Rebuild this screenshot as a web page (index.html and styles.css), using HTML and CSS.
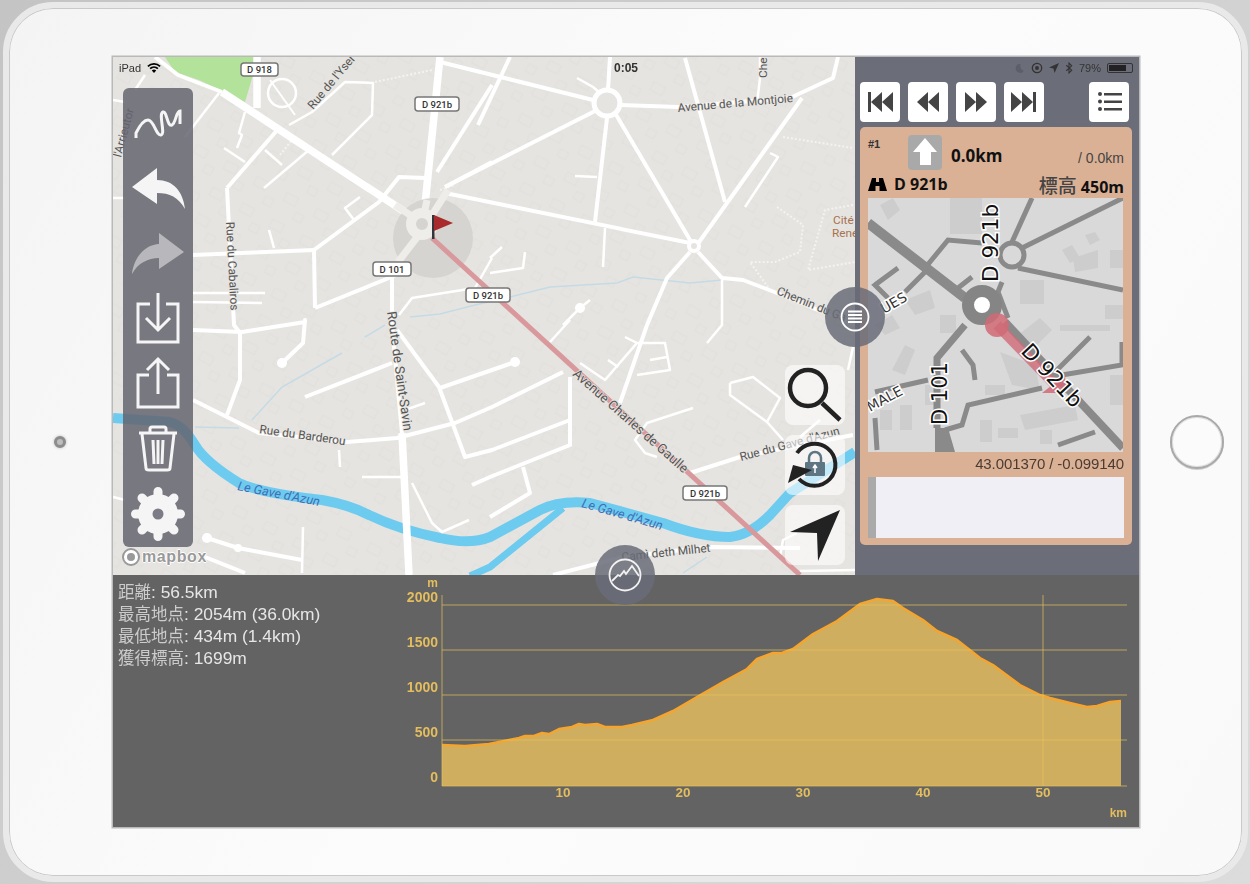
FILE: index.html
```html
<!DOCTYPE html>
<html lang="ja">
<head>
<meta charset="UTF-8">
<meta name="viewport" content="width=device-width, initial-scale=1.0">
<title>ルートプランナー</title>
<link rel="stylesheet" href="styles.css">
</head>
<body>

<div class="device">
    <div class="camera"></div>

    <div class="screen">
        <div class="map">
            <svg class="map-canvas" viewBox="113 57 742 518" width="742" height="518">
                <defs>
                    <pattern id="houses" width="34" height="30" patternUnits="userSpaceOnUse" patternTransform="rotate(28)">
                        <rect x="4" y="5" width="13" height="9" fill="none" stroke="#e1dfdb"/>
                        <rect x="21" y="18" width="9" height="8" fill="none" stroke="#e1dfdb"/>
                    </pattern>
                </defs>
                <rect x="113" y="57" width="742" height="518" fill="#e6e4e0"/>
                <rect x="113" y="57" width="742" height="518" fill="url(#houses)"/>
                <polygon points="165,57 175,72 199,80 245,102 255,68 255,57" fill="#b3e29a"/>

                <!-- streams and footpaths -->
                <g class="stream">
                    <polyline points="342,353 282,387 252,420"/>
                    <polyline points="195,427 239,428"/>
                    <polyline points="365,337 385,325"/>
                    <polyline points="510,297 550,287 617,283 633,277 690,283 722,280"/>
                    <polyline points="410,317 440,314 475,305 510,297"/>
                    <polyline points="683,573 707,557"/>
                </g>
                <g class="footpath">
                    <polyline points="375,82 432,70"/>
                    <polyline points="783,137 853,148"/>
                    <polyline points="777,207 803,225 800,252 775,262 750,262 770,290"/>
                    <polyline points="853,205 825,210 808,270 855,262"/>
                    <polyline points="440,190 455,185"/>
                    <polyline points="280,155 292,140"/>
                </g>

                <!-- river -->
                <path class="river" d="M113 418 170 422Q183 425 195 445 205 462 239 483 260 493 322 500 350 505 369 515 400 530 440 538 470 545 490 537L540 510Q560 500 590 503L663 523Q700 537 730 537 750 535 770 515L790 493 855 452"/>
                <polyline class="river-thin" points="470,576 490,567 563,508"/>

                <!-- small streets -->
                <g class="rd-s">
                    <polyline points="289,125 312,112 345,82 373,83 372,115 332,155"/>
                    <polyline points="265,150 282,165"/>
                    <polyline points="224,148 245,162"/>
                    <polyline points="245,112 239,133 242,135 237,148"/>
                    <polyline points="264,188 309,150"/>
                    <polyline points="360,197 345,208 354,220"/>
                    <polyline points="269,230 274,248"/>
                    <polyline points="193,293 265,293"/>
                    <polyline points="193,302 262,303"/>
                    <polyline points="219,93 185,137"/>
                    <polyline points="145,75 135,90"/>
                    <polyline points="113,100 125,102"/>
                    <polyline points="113,198 125,198"/>
                    <polyline points="113,497 125,500"/>
                    <polyline points="399,315 412,298 475,288 492,258"/>
                    <polyline points="339,450 340,467"/>
                    <polyline points="362,477 402,477"/>
                    <polyline points="412,483 432,523 442,532 469,520"/>
                    <polyline points="405,410 425,403"/>
                    <polyline points="303,527 302,573"/>
                    <polyline points="575,176 597,177"/>
                    <polyline points="605,228 603,267"/>
                    <polyline points="577,78 593,87 600,93"/>
                    <polyline points="770,153 778,157 745,207"/>
                    <polyline points="760,57 760,78 757,103"/>
                    <polyline points="722,278 722,325 707,343"/>
                    <polyline points="490,273 523,268 525,252"/>
                    <polyline points="490,258 502,247"/>
                    <polyline points="563,325 580,308 590,300"/>
                    <polyline points="550,342 570,320"/>
                    <polyline points="580,363 605,380 637,343 625,337"/>
                    <polyline points="608,360 618,367"/>
                    <polyline points="637,343 665,343 670,370 637,375"/>
                    <polyline points="650,360 667,357"/>
                    <polyline points="693,408 647,423 635,440 645,453 657,457"/>
                    <polyline points="730,383 753,377 780,398 767,422"/>
                    <polyline points="730,383 730,395 767,422 783,440"/>
                    <polyline points="800,437 820,420"/>
                    <polyline points="780,557 783,540 797,533"/>
                    <polyline points="848,370 853,347"/>
                    <polyline points="823,312 855,325"/>
                    <polyline points="800,571 855,570"/>
                </g>

                <!-- medium streets -->
                <g class="rd-m">
                    <polyline points="155,57 178,75 222,92"/>
                    <polyline points="227,188 279,128"/>
                    <polyline points="227,188 234,325 240,333 240,380 227,415"/>
                    <polyline points="193,255 314,250"/>
                    <polyline points="314,250 379,202 399,177 425,178"/>
                    <polyline points="314,250 315,308"/>
                    <polyline points="315,308 389,278 412,268"/>
                    <polyline points="193,330 242,332 305,322 305,320 303,343 282,363"/>
                    <polyline points="193,400 259,433 347,442 397,438 455,423 492,407 563,372"/>
                    <polyline points="305,397 392,363"/>
                    <polyline points="397,330 439,387 465,457 492,450 570,420"/>
                    <polyline points="440,388 515,362"/>
                    <polyline points="207,538 238,548 302,560"/>
                    <polyline points="205,557 245,573"/>
                    <polyline points="472,485 490,477 570,445 570,377"/>
                    <polyline points="523,467 530,493 490,517"/>
                    <polyline points="492,85 437,172"/>
                    <polyline points="510,57 478,125"/>
                    <polyline points="492,162 445,187"/>
                    <polyline points="445,193 690,243"/>
                    <polyline points="440,62 593,100"/>
                    <polyline points="445,187 597,110"/>
                    <polyline points="610,57 608,90"/>
                    <polyline points="607,118 595,222"/>
                    <polyline points="615,113 693,245"/>
                    <polyline points="685,58 725,202"/>
                    <polyline points="620,105 678,107 790,98 833,78 838,57"/>
                    <polyline points="802,98 697,245"/>
                    <polyline points="690,252 667,278 647,325 620,403"/>
                    <polyline points="698,252 722,278"/>
                    <polyline points="722,278 743,280 777,293 823,312"/>
                    <polyline points="690,473 740,457 853,435"/>
                    <polyline points="553,575 623,557 707,547 800,548"/>
                </g>

                <!-- main roads -->
                <g class="rd-l">
                    <polyline points="222,92 405,212"/>
                    <polyline points="440,57 425,205"/>
                    <polyline points="257,57 257,108"/>
                </g>
                <circle class="rd-ring" cx="282" cy="93" r="14"/>
                <line class="rd-thin" x1="270" y1="80" x2="295" y2="115"/>
                <polyline class="rd-m" points="392,278 392,325 402,433"/>
                <polyline class="rd-l" points="402,433 409,575"/>
                <circle class="knob" cx="282" cy="363" r="5"/>
                <circle class="knob" cx="207" cy="538" r="5"/>
                <circle class="knob" cx="238" cy="548" r="4"/>
                <circle class="knob" cx="515" cy="362" r="5"/>
                <circle class="knob" cx="580" cy="308" r="5"/>
                <circle class="ring-big" cx="607" cy="103" r="13"/>
                <circle class="ring-small" cx="694" cy="246" r="5"/>

                <!-- roundabout with the start flag -->
                <circle cx="433" cy="238" r="40" fill="#d6d4d0"/>
                <polyline class="rd-arm" points="418,236 398,262"/>
                <polyline class="rd-arm" points="395,205 413,217"/>
                <polyline class="rd-arm" points="427,200 424,214"/>
                <polyline class="rd-arm" points="448,190 432,215"/>
                <circle cx="422" cy="224" r="11" fill="#d6d4d0" stroke="#eeedea" stroke-width="10"/>
                <polyline class="route" points="432,238 800,575"/>
                <rect x="432" y="215" width="2.5" height="24" fill="#34343a"/>
                <polygon points="434,215 453,223 434,231" fill="#a82a2c"/>

                <!-- street names -->
                <text class="street" transform="translate(313,110) rotate(-50)">Rue de l'Yser</text>
                <text class="street" transform="translate(226,222) rotate(87)">Rue du Cabaliros</text>
                <text class="street street-lg" transform="translate(387,312) rotate(82)">Route de Saint-Savin</text>
                <text class="street" transform="translate(259,433) rotate(8)">Rue du Barderou</text>
                <text class="street" transform="translate(678,112) rotate(-5)">Avenue de la Montjoie</text>
                <text class="street street-lg" transform="translate(572,375) rotate(41.5)">Avenue Charles de Gaulle</text>
                <text class="street" transform="translate(741,461) rotate(-15)">Rue du Gave d'Azun</text>
                <text class="street" transform="translate(622,561) rotate(-6)">Camì deth Mìlhet</text>
                <text class="street" transform="translate(776,294) rotate(22)">Chemin du Ga</text>
                <text class="street" transform="translate(121,158) rotate(-75)">l'Arrieutor</text>
                <text class="street" transform="translate(767,78) rotate(-90)">Che</text>
                <text class="water" transform="translate(237,490) rotate(11)">Le Gave d'Azun</text>
                <text class="water" transform="translate(581,507) rotate(16)">Le Gave d'Azun</text>
                <text class="place" x="833" y="224">Cité</text>
                <text class="place" x="832" y="237">René</text>

                <!-- road numbers -->
                <g class="shield"><rect x="241" y="63" width="37" height="13" rx="3"/><text x="259.5" y="73">D 918</text></g>
                <g class="shield"><rect x="415" y="97" width="44" height="14" rx="3"/><text x="437" y="107.5">D 921b</text></g>
                <g class="shield"><rect x="373" y="262" width="38" height="14" rx="3"/><text x="392" y="272.5">D 101</text></g>
                <g class="shield"><rect x="466" y="288" width="44" height="14" rx="3"/><text x="488" y="298.5">D 921b</text></g>
                <g class="shield"><rect x="683" y="486" width="44" height="14" rx="3"/><text x="705" y="496.5">D 921b</text></g>
            </svg>

            <div class="toolbar">
                <svg class="tool" viewBox="0 0 60 52"><path class="tool-line" d="M8 40V35C12 27 16 22 20 22 26 22 28 38 33 37 38 36 30 16 35 14 39 13 39 29 44 27 48 25 48 13 52 13V26"/></svg>
                <svg class="tool" viewBox="0 0 60 52"><path d="M4 24 29 5V17C45 17 55 28 57 46 50 34 42 30 29 30V41Z" fill="#f5f5f5"/></svg>
                <svg class="tool" viewBox="0 0 60 52"><path d="M56 24 31 5V16C16 17 6 30 4 46 10 35 20 30 31 30V41Z" fill="#b8b8bc"/></svg>
                <svg class="tool" viewBox="0 0 60 52"><path class="tool-line" d="M22 11H10V49H50V11H38M30 0V37M18 25 30 37 42 25"/></svg>
                <svg class="tool" viewBox="0 0 60 52"><path class="tool-line" d="M21 17H10V49H50V17H39M30 36V1M19 12 30 1 41 12"/></svg>
                <svg class="tool" viewBox="0 0 60 52"><path class="tool-line" d="M11 10H49M22 10V6Q22 4 24 4H36Q38 4 38 6V10M14 11 18 45Q18 47 21 47H39Q42 47 42 45L46 11M25 17 26 41M30 17V41M35 17 34 41"/></svg>
                <svg class="tool" viewBox="0 0 60 52">
                    <path d="M30 3.500V48.500M7.500 26H52.500M14 10 46 42M46 10 14 42" stroke="#f5f5f5" stroke-width="9" stroke-linecap="round"/>
                    <circle cx="30" cy="26" r="20" fill="#f5f5f5"/>
                    <circle cx="30" cy="26" r="5.500" fill="#7b7c85"/>
                </svg>
            </div>

            <div class="mapbox">
                <svg width="20" height="20" viewBox="0 0 20 20"><circle cx="10" cy="10" r="8" fill="#fff" stroke="#999" stroke-width="2"/><circle cx="10" cy="10" r="4" fill="#999"/></svg>
                <span>mapbox</span>
            </div>

            <div class="map-buttons">
                <div class="map-button">
                    <svg viewBox="0 0 60 60"><circle cx="23" cy="23" r="18" fill="none" stroke="#222" stroke-width="4.5"/><path d="M37 38 55 55" stroke="#222" stroke-width="4.5"/></svg>
                </div>
                <div class="map-button">
                    <svg viewBox="0 0 60 60">
                        <rect x="20" y="27" width="20" height="14" rx="1" fill="#5e7583"/>
                        <path d="M24 27V23A6 6 0 0 1 36 23V27" fill="none" stroke="#5e7583" stroke-width="2.5"/>
                        <path d="M30 38V31M28 33 30 30 32 33" fill="none" stroke="#fff" stroke-width="1.5"/>
                        <path d="M12 18A21 21 0 1 1 14 44" fill="none" stroke="#222" stroke-width="4"/>
                        <polygon points="3,48 8,30 27,35" fill="#222"/>
                    </svg>
                </div>
                <div class="map-button">
                    <svg viewBox="0 0 60 60"><polygon points="55,5 5,27 32,28 33,56" fill="#222"/></svg>
                </div>
            </div>
        </div>

        <div class="side">
            <div class="transport">
                <div class="key"><svg viewBox="0 0 40 40"><path d="M8 10H11V30H8ZM22 10V30L11 20ZM33 10V30L22 20Z"/></svg></div>
                <div class="key"><svg viewBox="0 0 40 40"><path d="M20 10V30L9 20ZM31 10V30L20 20Z"/></svg></div>
                <div class="key"><svg viewBox="0 0 40 40"><path d="M9 10V30L20 20ZM20 10V30L31 20Z"/></svg></div>
                <div class="key"><svg viewBox="0 0 40 40"><path d="M7 10V30L18 20ZM18 10V30L29 20ZM29 10H32V30H29Z"/></svg></div>
                <div class="key key-list"><svg viewBox="0 0 40 40"><path d="M15 11H33V13.500H15ZM15 18.500H33V21H15ZM15 26H33V28.500H15Z"/><circle cx="11" cy="12" r="2"/><circle cx="11" cy="19.5" r="2"/><circle cx="11" cy="27" r="2"/></svg></div>
            </div>

            <div class="card">
                <div class="card-head">
                    <span class="step-no">#1</span>
                    <div class="turn"><svg viewBox="0 0 34 35"><polygon points="5,17 17,3 29,17 23,17 23,30 12,30 12,17" fill="#fff"/></svg></div>
                    <span class="step-dist">0.0km</span>
                    <span class="step-total">/ 0.0km</span>
                </div>
                <div class="card-road">
                    <span class="road-name">
                        <svg width="19" height="14" viewBox="0 0 19 14"><path d="M0 14 4 1H8V5H11V1H15L19 14H11.500V9H7.500V14Z"/></svg>
                        D 921b
                    </span>
                    <span class="altitude"><span class="altitude-label">標高</span> 450m</span>
                </div>

                <svg class="mini-map" viewBox="868 198 255 254" width="255" height="254">
                    <rect x="868" y="198" width="255" height="254" fill="#d9d9d9"/>
                    <g fill="#cdcdcd">
                        <rect x="950" y="198" width="32" height="36"/>
                        <polygon points="880,205 893,198 900,210 888,220"/>
                        <rect x="1020" y="280" width="24" height="24"/>
                        <polygon points="1062,250 1072,245 1080,258 1070,263"/>
                        <polygon points="1073,258 1098,250 1098,268 1075,272"/>
                        <rect x="1110" y="250" width="13" height="18"/>
                        <polygon points="1085,235 1095,232 1100,240 1090,245"/>
                        <rect x="1105" y="305" width="18" height="14"/>
                        <polygon points="905,300 930,290 935,308 915,315"/>
                        <polygon points="892,370 905,345 915,350 905,375"/>
                        <rect x="940" y="315" width="16" height="18"/>
                        <polygon points="875,325 892,315 900,328 885,335"/>
                        <rect x="985" y="385" width="20" height="10"/>
                        <rect x="925" y="385" width="12" height="20"/>
                        <rect x="880" y="410" width="12" height="20"/>
                        <rect x="900" y="405" width="12" height="25"/>
                        <rect x="980" y="420" width="12" height="22"/>
                        <rect x="998" y="428" width="20" height="10"/>
                        <polygon points="1020,415 1075,405 1078,420 1025,430"/>
                        <rect x="1040" y="430" width="12" height="14"/>
                        <polygon points="1018,335 1040,318 1052,330 1032,350"/>
                        <rect x="1060" y="325" width="50" height="6"/>
                        <rect x="1110" y="375" width="13" height="30"/>
                        <polygon points="1000,352 1035,365 1040,390 1012,385"/>
                    </g>
                    <g class="mini-road">
                        <polyline points="868,223 965,298" style="stroke-width:10"/>
                        <polyline points="1005,322 1123,448" style="stroke-width:8"/>
                        <polyline points="965,325 937,358 937,428" style="stroke-width:7"/>
                        <polyline points="925,268 948,240 982,243"/>
                        <polyline points="925,272 905,292"/>
                        <polyline points="898,268 875,285 888,298"/>
                        <polyline points="1032,198 1012,242"/>
                        <polyline points="1022,248 1123,198"/>
                        <polyline points="1018,268 1123,290"/>
                        <polyline points="1002,282 998,292 1008,318"/>
                        <polyline points="972,277 958,288"/>
                        <polyline points="1055,372 1090,337"/>
                        <polyline points="1062,375 1122,365 1122,342"/>
                        <polyline points="1042,388 968,405 962,425 945,430"/>
                        <polyline points="1058,445 1095,432"/>
                        <polyline points="962,350 973,365 975,380"/>
                        <polyline points="875,418 877,450"/>
                        <polyline points="875,392 928,380"/>
                        <circle cx="1012" cy="255" r="12"/>
                    </g>
                    <polygon points="935,428 948,428 955,452 935,452" fill="#8a8a8a"/>
                    <circle cx="982" cy="305" r="14" fill="#fff" stroke="#858585" stroke-width="12"/>
                    <polyline points="997,325 1058,388" fill="none" stroke="#d06a75" stroke-opacity=".8" stroke-width="10"/>
                    <polygon points="1042,393 1065,375 1066,393" fill="#d06a75" fill-opacity=".85"/>
                    <circle cx="997" cy="325" r="12" fill="#d06a75" fill-opacity=".85"/>
                    <g class="mini-label">
                        <text transform="translate(998,282) rotate(-90)">D 921b</text>
                        <text class="mini-small" transform="translate(947,425) rotate(-90)">D 101</text>
                        <text transform="translate(1020,352) rotate(47)">D 921b</text>
                        <text class="mini-name" transform="translate(884,314) rotate(-30)">UES</text>
                        <text class="mini-name" transform="translate(870,412) rotate(-28)">MALE</text>
                    </g>
                </svg>

                <div class="coords">43.001370 / -0.099140</div>
                <div class="memo"></div>
            </div>
        </div>

        <div class="elevation">
            <div class="stats">
                <div class="stat"><span class="cjk">距離</span>: 56.5km</div>
                <div class="stat"><span class="cjk">最高地点</span>: 2054m (36.0km)</div>
                <div class="stat"><span class="cjk">最低地点</span>: 434m (1.4km)</div>
                <div class="stat"><span class="cjk">獲得標高</span>: 1699m</div>
            </div>
            <svg class="profile" viewBox="385 575 754 252" width="754" height="252">
                <polygon class="profile-fill" points="442,786 442,745 465,746 489,744 509,740 519,738 525,736 534,736 542,733 549,734 559,729 572,727 579,724 585,725 597,724 605,727 622,727 632,725 653,720 673,711 697,697 723,682 747,669 757,659 773,653 782,653 793,649 813,634 837,621 860,604 877,599 893,601 903,608 923,620 937,631 957,640 980,658 993,665 1020,685 1040,695 1050,698 1070,703 1087,707 1097,706 1110,702 1121,701 1121,786"/>
                <polyline class="profile-line" points="442,745 465,746 489,744 509,740 519,738 525,736 534,736 542,733 549,734 559,729 572,727 579,724 585,725 597,724 605,727 622,727 632,725 653,720 673,711 697,697 723,682 747,669 757,659 773,653 782,653 793,649 813,634 837,621 860,604 877,599 893,601 903,608 923,620 937,631 957,640 980,658 993,665 1020,685 1040,695 1050,698 1070,703 1087,707 1097,706 1110,702 1121,701"/>
                <g class="grid">
                    <line x1="442" y1="605" x2="1127" y2="605"/>
                    <line x1="442" y1="650" x2="1127" y2="650"/>
                    <line x1="442" y1="695" x2="1127" y2="695"/>
                    <line x1="442" y1="740" x2="1127" y2="740"/>
                    <line x1="442" y1="786" x2="1127" y2="786"/>
                    <line x1="442" y1="595" x2="442" y2="786"/>
                    <line x1="1043" y1="595" x2="1043" y2="786"/>
                </g>
                <g class="tick tick-y">
                    <text class="tick-unit" x="438" y="587">m</text>
                    <text x="438" y="602">2000</text>
                    <text x="438" y="647">1500</text>
                    <text x="438" y="692">1000</text>
                    <text x="438" y="737">500</text>
                    <text x="438" y="782">0</text>
                </g>
                <g class="tick tick-x">
                    <text x="563" y="797">10</text>
                    <text x="683" y="797">20</text>
                    <text x="803" y="797">30</text>
                    <text x="923" y="797">40</text>
                    <text x="1043" y="797">50</text>
                </g>
                <text class="tick tick-y tick-unit" x="1127" y="817">km</text>
            </svg>
        </div>

        <div class="status">
            <div class="status-left">
                iPad
                <svg width="14" height="11" viewBox="0 0 14 11"><path d="M7 10 4.800 7.500A3.200 3.200 0 0 1 9.200 7.500ZM3.700 6.300 2.500 5A6.500 6.500 0 0 1 11.500 5L10.300 6.300A4.800 4.800 0 0 0 3.700 6.300ZM1.500 4 .3 2.700A9.800 9.800 0 0 1 13.700 2.700L12.500 4A8 8 0 0 0 1.500 4Z"/></svg>
            </div>
            <div class="status-time">0:05</div>
            <div class="status-right">
                <svg width="11" height="11" viewBox="0 0 10 10"><path d="M6 1A4 4 0 1 0 9 7 4.500 4.500 0 0 1 6 1Z" fill="#5c5f69"/></svg>
                <svg width="12" height="12" viewBox="0 0 11 11"><circle cx="5.5" cy="5.5" r="4.3" fill="none" stroke="#333" stroke-width="1.2"/><circle cx="5.5" cy="5.5" r="1.8" fill="#333"/></svg>
                <svg width="10" height="10" viewBox="0 0 9 9"><polygon points="9,0 0,4 4,5 5,9" fill="#333"/></svg>
                <svg width="8" height="12" viewBox="0 0 7 11"><path d="M1 3 6 7.500 3.500 10V1L6 3.500 1 8" fill="none" stroke="#333"/></svg>
                <span>79%</span>
                <div class="battery"><div class="battery-level"></div></div>
            </div>
        </div>

        <div class="handle handle-menu">
            <svg width="30" height="30" viewBox="0 0 30 30"><circle cx="15" cy="15" r="13.5" fill="none" stroke="#fff" stroke-width="1.8"/><path d="M8 9.500H22M8 13H22M8 16.500H22M8 20H22" stroke="#fff" stroke-width="1.8"/></svg>
        </div>
        <div class="handle handle-chart">
            <svg width="34" height="34" viewBox="0 0 34 34"><circle cx="17" cy="17" r="15.5" fill="none" stroke="#f2f2f2" stroke-width="1.8"/><path d="M4 23 10 17 12 18 16 13 18 16 24 8 31 18" fill="none" stroke="#f2f2f2" stroke-width="1.8"/></svg>
        </div>
    </div>

    <div class="home"></div>
</div>

</body>
</html>
```

FILE: styles.css
```css
body {
    margin: 0;
    width: 1250px;
    height: 884px;
    overflow: hidden;
    background: linear-gradient(135deg, #c4c4c4 0%, #dcdcdc 100%);
    font-family: "Liberation Sans", Arial, sans-serif;
}
.device {
    display: flex;
    align-items: center;
    box-sizing: border-box;
    width: 1245px;
    height: 880px;
    margin: 2px 0 0 3px;
    border: 6px solid #e9e9e9;
    border-radius: 50px;
    background: linear-gradient(120deg, #f4f4f4 0%, #fcfcfc 50%, #f9f9f9 100%);
    box-shadow: inset 0 0 0 1px #c9c9c9;
}
.camera {
    box-sizing: border-box;
    width: 12px;
    height: 12px;
    margin: 0 47px 0 45px;
    border: 3px solid #8c8c8c;
    border-radius: 50%;
    background: #bdbdbd;
    box-shadow: 0 0 3px #bbb;
}
.home {
    box-sizing: border-box;
    width: 54px;
    height: 54px;
    margin-left: 31px;
    border: 2px solid #a9a9a9;
    border-radius: 50%;
    background: #fbfbfb;
    box-shadow: inset 0 0 0 1px #dedede, 0 1px 0 #ccc;
}
.screen {
    position: relative;
    display: grid;
    grid-template-columns: 742px 284px;
    grid-template-rows: 518px 252px;
    flex: none;
    width: 1026px;
    height: 770px;
    box-shadow: 0 0 0 1.5px #b9b9b9;
    filter: blur(.4px);
}

/* map */
.map {
    position: relative;
    overflow: hidden;
}
.map-canvas {
    display: block;
}
.rd-s polyline, .rd-m polyline, .rd-l polyline, polyline.rd-m, polyline.rd-l, .rd-ring, .rd-thin, .ring-big, .ring-small {
    fill: none;
    stroke: #fff;
    stroke-linejoin: round;
}
.rd-s polyline {
    stroke-width: 2.5;
}
.rd-m polyline, polyline.rd-m {
    stroke-width: 4;
}
.rd-l polyline, polyline.rd-l {
    stroke-width: 7.5;
}
.rd-arm {
    fill: none;
    stroke: #eeedea;
    stroke-width: 7;
}
.rd-ring {
    stroke-width: 2.5;
}
.rd-thin {
    stroke-width: 2;
}
.ring-big {
    fill: #e6e4e0;
    stroke-width: 5;
}
.ring-small {
    fill: #e6e4e0;
    stroke-width: 4;
}
.knob {
    fill: #fff;
}
.stream polyline {
    fill: none;
    stroke: #c4dbe6;
    stroke-width: 1.5;
}
.footpath polyline {
    fill: none;
    stroke: #f4f3f1;
    stroke-width: 2;
    stroke-dasharray: 2 2;
}
.river, .river-thin {
    fill: none;
    stroke: #6dcbf0;
    stroke-linejoin: round;
}
.river {
    stroke-width: 10;
}
.river-thin {
    stroke-width: 7;
}
.route {
    fill: none;
    stroke: #d9989c;
    stroke-width: 5;
}
.street, .water, .place, .shield text {
    font-family: Roboto, sans-serif;
    font-size: 11.8px;
}
.street {
    fill: #555;
    stroke: #e6e4e0;
    stroke-width: 1.5px;
    paint-order: stroke;
}
.street-lg {
    font-size: 13.2px;
}
.water {
    fill: #3f6fb5;
    font-size: 12.8px;
    font-style: italic;
}
.place {
    fill: #a8724f;
}
.shield rect {
    fill: #fff;
    stroke: #777;
    stroke-width: 1.5;
}
.shield text {
    fill: #333;
    font-size: 9.5px;
    font-weight: 500;
    text-anchor: middle;
}

.toolbar {
    position: absolute;
    left: 10px;
    top: 31px;
    display: flex;
    flex-direction: column;
    align-items: center;
    gap: 13px;
    box-sizing: border-box;
    width: 70px;
    height: 459px;
    padding-top: 10px;
    border-radius: 6px;
    background: rgba(100, 101, 112, .85);
}
.tool {
    flex: none;
    width: 60px;
    height: 52px;
    overflow: visible;
}
.tool-line {
    fill: none;
    stroke: #f5f5f5;
    stroke-width: 3;
}
.mapbox {
    position: absolute;
    left: 8px;
    top: 490px;
    display: flex;
    align-items: center;
    gap: 1px;
    color: #999;
    font-size: 16px;
    font-weight: bold;
    letter-spacing: .6px;
    text-shadow: 1px 0 #fff, -1px 0 #fff, 0 1px #fff, 0 -1px #fff;
}
.map-buttons {
    position: absolute;
    left: 672px;
    top: 308px;
    display: flex;
    flex-direction: column;
    gap: 10px;
}
.map-button {
    width: 60px;
    height: 60px;
    border-radius: 8px;
    background: rgba(255, 255, 255, .6);
}
.map-button svg {
    display: block;
}

/* right panel */
.side {
    box-sizing: border-box;
    padding: 25px 10px 0 5px;
    background: #6b6e78;
}
.transport {
    display: flex;
    gap: 8px;
}
.key {
    width: 40px;
    height: 40px;
    border-radius: 4px;
    background: #fff;
    fill: #444;
}
.key svg {
    display: block;
}
.key-list {
    margin-left: auto;
}
.card {
    box-sizing: border-box;
    width: 272px;
    height: 418px;
    margin-top: 5px;
    padding: 8px;
    border-radius: 5px;
    background: #dbb196;
    color: #111;
}
.card-head {
    display: flex;
    height: 35px;
}
.step-no {
    width: 40px;
    font-size: 11px;
    font-weight: bold;
    color: #333;
    padding-top: 3px;
}
.turn {
    width: 34px;
    height: 35px;
    border-radius: 4px;
    background: #a9a9a9;
}
.step-dist {
    margin: 11px 0 0 9px;
    font-size: 17px;
    font-weight: bold;
    font-family: "Open Sans", sans-serif;
    line-height: 20px;
}
.step-total {
    margin: 14px 0 0 auto;
    font-size: 14px;
    color: #444;
    line-height: 18px;
}
.card-road {
    display: flex;
    justify-content: space-between;
    align-items: center;
    height: 28px;
    font-family: "Open Sans", sans-serif;
    font-size: 16px;
    font-weight: bold;
}
.road-name {
    display: flex;
    align-items: center;
    gap: 7px;
}
.altitude-label {
    color: #444;
    font-family: "Noto Sans CJK JP", sans-serif;
    font-size: 19px;
    font-weight: 500;
}
.mini-map {
    display: block;
}
.mini-road > polyline, .mini-road > circle {
    fill: none;
    stroke: #8a8a8a;
    stroke-width: 5;
}
.mini-label text {
    fill: #111;
    stroke: #fff;
    stroke-width: 3px;
    paint-order: stroke;
    font-family: "DejaVu Sans", sans-serif;
    font-size: 21.5px;
}
.mini-label .mini-small {
    font-size: 21px;
}
.mini-label .mini-name {
    fill: #333;
    font-size: 14px;
}
.coords {
    height: 25px;
    font-size: 15px;
    line-height: 24px;
    text-align: right;
    color: #4a3c33;
    letter-spacing: -.1px;
}
.memo {
    box-sizing: border-box;
    width: 256px;
    height: 61px;
    border-left: 8px solid #aaa;
    background: #efeff5;
}

/* elevation chart */
.elevation {
    display: flex;
    grid-column: 1 / 3;
    background: #636363;
}
.stats {
    box-sizing: border-box;
    width: 272px;
    padding: 5px 0 0 5px;
    color: #e6e6e6;
    font-size: 17.4px;
}
.stat {
    height: 22px;
    line-height: 22px;
    white-space: nowrap;
}
.cjk {
    font-family: "Noto Sans CJK JP", sans-serif;
    font-size: 16.5px;
    line-height: 22px;
    color: #ccc;
}
.profile {
    display: block;
}
.profile-fill {
    fill: #cfae60;
}
.profile-line {
    fill: none;
    stroke: #f5a52d;
    stroke-width: 2.5;
    stroke-linejoin: round;
}
.grid line {
    stroke: rgba(235, 195, 90, .45);
    stroke-width: 1.5;
}
.tick {
    fill: #e3bd5e;
    font-family: "Liberation Sans", sans-serif;
    font-size: 13.5px;
    font-weight: bold;
}
.tick-y text {
    font-size: 14px;
}
.tick-y .tick-unit, .tick-unit {
    font-size: 12px;
}
.tick-y {
    text-anchor: end;
}
.tick-x {
    text-anchor: middle;
}

/* things over the panels */
.status {
    position: absolute;
    left: 0;
    right: 0;
    top: 0;
    display: grid;
    grid-template-columns: 1fr auto 1fr;
    align-items: center;
    height: 22px;
    padding: 0 6px;
    box-sizing: border-box;
    font-size: 11px;
    color: #333;
}
.status-left {
    display: flex;
    align-items: center;
    gap: 6px;
}
.status-time {
    font-weight: bold;
    font-size: 12px;
}
.status-right {
    display: flex;
    align-items: center;
    justify-content: flex-end;
    gap: 6px;
}
.battery {
    box-sizing: border-box;
    width: 26px;
    height: 10px;
    padding: 1px;
    border: 1px solid #333;
    border-radius: 2px;
}
.battery-level {
    width: 79%;
    height: 100%;
    background: #222;
}
.handle {
    position: absolute;
    display: flex;
    align-items: center;
    justify-content: center;
    width: 60px;
    height: 60px;
    border-radius: 50%;
    background: rgba(105, 108, 120, .85);
}
.handle-menu {
    left: 712px;
    top: 230px;
}
.handle-chart {
    left: 482px;
    top: 488px;
}
```
